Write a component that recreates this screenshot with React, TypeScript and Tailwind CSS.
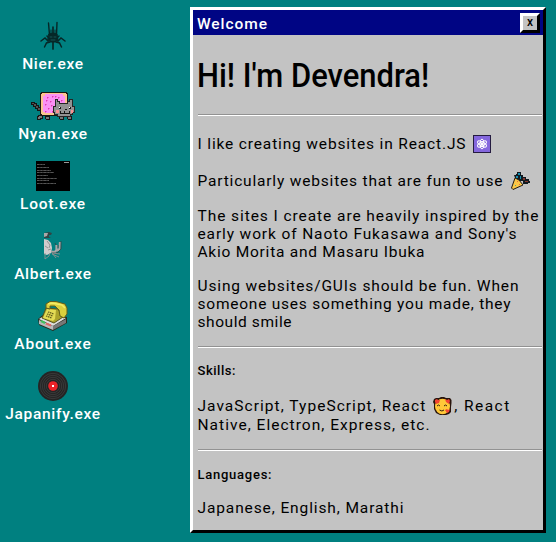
import type { ReactNode } from "react";

function NierIcon() {
  return (
    <svg width="26" height="30" viewBox="0 0 26 30" fill="none" stroke="#062626" strokeLinecap="round">
      <path d="M8.500 2 L9.500 14 M17 1.500 L16.500 14" strokeWidth="1.400" />
      <path d="M13 6 V28" strokeWidth="1.700" />
      <path d="M9 13 L13 12 L17 13 L18 19 L15 21 L11 21 L8 19Z" fill="#052828" strokeWidth="1" />
      <path d="M11 9 V14 M15 9 V14" strokeWidth="1" />
      <path d="M8 20 L5 17 L1 20 M18 20 L21 17 L25 20 M10 21 L6.500 22 L4.500 26 M16 21 L19.500 22 L21.500 26 M7 15 L9 17 M19 15 L17 17" strokeWidth="1.500" />
      <path d="M10 16 H12 M14 16 H16 M11 19 H15" stroke="#1a6060" strokeWidth="0.800" />
    </svg>
  );
}

function NyanIcon() {
  return (
    <svg width="46" height="30" viewBox="0 0 46 30" shapeRendering="crispEdges">
      <path d="M1 11 H4 V12 H6 V14 H8 V16 H10 V19 H7 V17 H5 V15 H3 V13 H1Z" fill="#555" stroke="#151515" />
      <path d="M8 24 H12 V27 H10 V28 H7 V25 H8Z M15 25 H19 V28 H16Z M29 25 H33 V28 H30Z M37 25 H41 V28 H38Z" fill="#777" stroke="#151515" />
      <path d="M11 1 H37 V2 H38 V25 H10 V2 H11Z" fill="#1c1712" />
      <path d="M12 2 H36 V3 H37 V24 H12 V23 H11 V3 H12Z" fill="#fbc58f" />
      <path d="M15 3 H33 V5 H35 V22 H15 V21 H13 V5 H15Z" fill="#fb91f5" />
      <path d="M17 6h1v1h-1z M22 5h1v1h-1z M28 6h1v1h-1z M31 9h1v1h-1z M20 10h1v1h-1z M15 13h1v1h-1z M21 14h1v1h-1z M18 17h1v1h-1z M15 20h1v1h-1z M22 20h1v1h-1z M25 5h1v1h-1z M16 9h1v1h-1z" fill="#dc2aa5" stroke="#e13eb3" strokeWidth=".5" />
      <path d="M25 8 H28 V10 H30 V12 H37 V10 H39 V8 H43 V15 H45 V22 H43 V24 H41 V26 H27 V24 H24 V22 H23 V15 H25Z" fill="#252525" />
      <path d="M26 9 H27 V11 H29 V13 H38 V11 H40 V9 H42 V16 H44 V21 H42 V23 H40 V25 H28 V23 H25 V21 H24 V16 H26Z" fill="#929292" />
      <path d="M29 16h2v2h-2z M39 16h2v2h-2z M35 18h2v1h-2z M30 20h1v2h3v-2h1v2h4v-2h1v3h-10z" fill="#151515" />
      <path d="M29 16h1v1h-1z M39 16h1v1h-1z" fill="#fff" />
      <path d="M26 19h3v3h-3z M41 19h2v3h-2z" fill="#fa9292" />
    </svg>
  );
}

function LootIcon() {
  const rows: [number, number][] = [[3, 8], [6, 12], [9, 14], [11, 17], [14, 11], [17, 20], [19, 12], [22, 19]];
  return (
    <svg width="34" height="30" viewBox="0 0 34 30">
      <rect width="34" height="30" />
      {rows.map(([y, w]) => (
        <path key={y} d={`M1 ${y + 0.5} h${w}`} stroke="#555" strokeWidth="1.200" strokeDasharray="2 .3 1 .2" />
      ))}
      <path d="M28 1.500 h5" stroke="#999" />
    </svg>
  );
}

function AlbertIcon() {
  return (
    <svg width="18" height="30" viewBox="0 0 18 30">
      <path d="M0 2 L5 1 L8 2 L7 4 L5 4 L5 6 L7 7 L0 7Z" fill="#2f4545" />
      <path d="M0 2 L4 2 L3 5 L0 6Z" fill="#a8a8a8" />
      <path d="M0 8 L4 9 L7 12 L8 17 L7 22 L3 24 L0 23Z" fill="#d0cccd" />
      <path d="M3 10 L6 14 L5 17 M4 19 L7 18 M1 15 L4 17" stroke="#777d7d" fill="none" strokeWidth=".7" />
      <path d="M7 20.500 L11 21 L12.500 19 L12.500 14 M13 20 L15.500 18 L16 11" fill="none" stroke="#a9a6a8" strokeWidth="2.200" />
      <path d="M12 14 L11 12 M14 14 V17 M17 10 V18 L13 22 H8" fill="none" stroke="#344444" strokeWidth=".8" />
      <path d="M1 22 L1 28 M6 22 L5 25 L1 28 M8 22 L12 27 M8 23 L15 26 M8 22 L16 23" fill="none" stroke="#8a9191" strokeWidth=".9" />
    </svg>
  );
}

function PhoneIcon() {
  return (
    <svg width="30" height="30" viewBox="0 0 30 30">
      <path d="M0 18 L6 13 L29 16 V22 L15 30 L1 24Z" fill="#292a1d" />
      <path d="M1 18 L7 14 L28 17 L15 25Z" fill="#dedede" />
      <path d="M1 19 L15 25 V29 L1 23Z" fill="#b9b9b9" />
      <path d="M15 25 L28 18 V22 L15 29Z" fill="#777" />
      <path d="M3 20 L7 22" stroke="#42c25b" strokeWidth="2" />
      <path d="M8 22.500 L13 24.500" stroke="#df6865" strokeWidth="2" />
      <path d="M4 17 L8 7 L20 8 L25 16 L16 22Z" fill="#aba32b" stroke="#57551b" />
      <path d="M5 17 L9 8 L18 9 L17 18 L15 20Z" fill="#e4dc55" />
      <path d="M8 3 L12 0.500 H18 L27 3 L29 7 V13 L26 17 L22 15 L21 9 L17 5 L12 5 V8 L8 7Z" fill="#d9d03d" stroke="#615c1b" />
      <path d="M10 3 L14 2 L24 4 L27 7" fill="none" stroke="#f4ec66" strokeWidth="1.500" />
      <path d="M10 11 L16 13 M9 13 L15 15 M8 15 L14 17" stroke="#625d1d" strokeWidth="1.300" strokeDasharray="1.500 .6" />
    </svg>
  );
}

function RecordIcon() {
  return (
    <svg width="30" height="30" viewBox="0 0 30 30" fill="none">
      <circle cx="15" cy="15" r="15" fill="#242424" />
      <g stroke="#484848" strokeWidth=".6">
        <circle cx="15" cy="15" r="12.700" />
        <circle cx="15" cy="15" r="10.700" />
        <circle cx="15" cy="15" r="8.700" />
        <circle cx="15" cy="15" r="6.700" />
      </g>
      <circle cx="15" cy="15" r="4.800" fill="#ec2228" />
      <rect x="14" y="14" width="2" height="2" fill="#fff" />
    </svg>
  );
}

function AtomEmoji() {
  return (
    <svg className="ml-[6.500px] shrink-0" width="18" height="18" viewBox="0 0 18 18" fill="none">
      <rect x=".5" y=".5" width="17" height="17" fill="#8467dd" stroke="#241b40" />
      <g stroke="#fff" strokeWidth="1">
        <ellipse cx="9" cy="9" rx="2" ry="5" />
        <ellipse cx="9" cy="9" rx="2" ry="5" transform="rotate(60 9 9)" />
        <ellipse cx="9" cy="9" rx="2" ry="5" transform="rotate(120 9 9)" />
      </g>
      <circle cx="9" cy="9" r="1.200" fill="#fff" />
    </svg>
  );
}

function PartyEmoji() {
  return (
    <svg className="ml-[7.500px] shrink-0" width="19" height="18" viewBox="0 0 19 18">
      <path d="M3 3 H5 V2 H6 V0 H10 V3 H12 V5 H15 V7 H18 V9 H19 V11 H17 V12 H12 V9 H9 L4 6Z" fill="#111a20" />
      <path d="M5 4h2v2H5z M7 1h2v2H7z M9 4h1v3H9z" fill="#158fb0" />
      <path d="M12 6h2v2h-2z M14 9h3v1h-3z" fill="#85362d" />
      <path d="M4 6 L8 8 L12 13 L2 17.500 L.500 16Z" fill="#fdc746" stroke="#231b12" strokeLinejoin="round" />
      <path d="M6 9h1v1H6z M8 12h1v1H8z" fill="#e46a3d" />
      <path d="M4 13h1v1H4z" fill="#4dae8e" />
    </svg>
  );
}

function LoveEmoji() {
  return (
    <svg className="ml-[6.500px] mr-[2.500px] shrink-0" width="19" height="19" viewBox="0 0 19 19">
      <path d="M1 2 L3 1 H6 L8 0 H11 L13 1 H17 L18.500 3 V6 L18 10 V15 L16 17 L13 18 H7 L3 16 L1 12 V7 L0 5Z" fill="#29150d" />
      <ellipse cx="9.500" cy="9.500" rx="7.500" ry="7.800" fill="#ffc838" />
      <path d="M2 3 L4 2 L5 3 L7 3 L6 6 L3 7 L2 5Z M12 2 L14 3 L16 2 L17 4 L16 7 L13 5Z M12 13 L14 12 L15 13 L17 12 L16 15 L14 16Z" fill="#f34432" />
      <path d="M4 9 L5.500 8 L7 9 M11 9 L12.500 8 L14 9 M6.500 13 Q9 15 11 13" fill="none" stroke="#342112" />
    </svg>
  );
}

const desktopItems: { name: string; spacing: string; icon: ReactNode }[] = [
  { name: "Nier.exe", spacing: "tracking-[0.68px]", icon: <NierIcon /> },
  { name: "Nyan.exe", spacing: "tracking-[0.71px]", icon: <NyanIcon /> },
  { name: "Loot.exe", spacing: "tracking-[0.76px]", icon: <LootIcon /> },
  { name: "Albert.exe", spacing: "tracking-[0.69px]", icon: <AlbertIcon /> },
  { name: "About.exe", spacing: "tracking-[0.8px]", icon: <PhoneIcon /> },
  { name: "Japanify.exe", spacing: "tracking-[0.7px]", icon: <RecordIcon /> },
];

function Rule({ className }: { className: string }) {
  return <hr className={`h-[2px] mr-px border-0 border-t border-b border-t-[#929292] border-b-white ${className}`} />;
}

export default function App() {
  return (
    <main className="flex h-[542px] w-[556px] overflow-hidden bg-[#008080] font-[Roboto,sans-serif] text-[15.5px] leading-[18px] whitespace-nowrap">
      <nav className="flex w-[106px] shrink-0 flex-col gap-[18px] pt-[21px] font-medium text-white">
        {desktopItems.map(({ name, spacing, icon }) => (
          <div key={name} className="flex h-[52px] flex-col items-center gap-[4px]">
            <div className="flex h-[30px] items-center justify-center">{icon}</div>
            <span className={spacing}>{name}</span>
          </div>
        ))}
      </nav>

      <section className="mt-[7px] ml-[84px] flex h-[526px] w-[356px] shrink-0 flex-col border-[3px] border-t-white border-r-black border-b-black border-l-white bg-[#c3c3c3] text-black">
        <header className="flex h-[25px] shrink-0 items-center justify-between bg-[#000584] pr-[3px] pl-[4px] text-white">
          <span className="pt-[2px] font-medium tracking-[0.94px]">Welcome</span>
          <button className="flex h-[20px] w-[20px] items-center justify-center border-[3px] border-t-white border-r-black border-b-black border-l-white bg-[#c3c3c3] pb-px text-[12px] leading-none font-medium text-black">
            x
          </button>
        </header>

        <div className="flex flex-col pl-[5px]">
          <h1 className="-ml-px mt-[20px] h-[40px] w-[260px] origin-left scale-x-[0.91] text-[34px] leading-[40px] font-medium">Hi! I'm Devendra!</h1>
          <Rule className="mt-[19px]" />
          <p className="mt-[19px] -ml-[0.5px] flex h-[18px]">
            <span className="tracking-[0.855px]">I like creating websites in React.JS</span>
            <AtomEmoji />
          </p>
          <p className="mt-[19px] -ml-[0.5px] flex h-[18px]">
            <span className="tracking-[0.815px]">Particularly websites that are fun to use</span>
            <PartyEmoji />
          </p>
          <p className="mt-[17px] -ml-[0.5px]">
            <span className="block tracking-[0.932px]">The sites I create are heavily inspired by the</span>
            <span className="block tracking-[0.879px]">early work of Naoto Fukasawa and Sony's</span>
            <span className="block tracking-[0.758px]">Akio Morita and Masaru Ibuka</span>
          </p>
          <p className="mt-[16px] -ml-[0.5px]">
            <span className="block tracking-[0.864px]">Using websites/GUIs should be fun. When</span>
            <span className="block tracking-[0.771px]">someone uses something you made, they</span>
            <span className="block tracking-[0.579px]">should smile</span>
          </p>
          <Rule className="mt-[15px]" />
          <h2 className="mt-[14px] -ml-[0.5px] text-[13px] font-medium tracking-[0.549px]">Skills:</h2>
          <p className="mt-[17px] -ml-[0.5px]">
            <span className="flex h-[19px]">
              <span className="tracking-[1.034px]">JavaScript, TypeScript, React</span>
              <LoveEmoji />
              <span className="tracking-[1.453px]">, React</span>
            </span>
            <span className="block tracking-[1.029px]">Native, Electron, Express, etc.</span>
          </p>
          <Rule className="mt-[15px]" />
          <h2 className="mt-[15px] -ml-[0.5px] text-[13px] font-medium tracking-[0.742px]">Languages:</h2>
          <p className="mt-[15px] -ml-[0.5px] tracking-[0.889px]">Japanese, English, Marathi</p>
        </div>
      </section>
    </main>
  );
}
